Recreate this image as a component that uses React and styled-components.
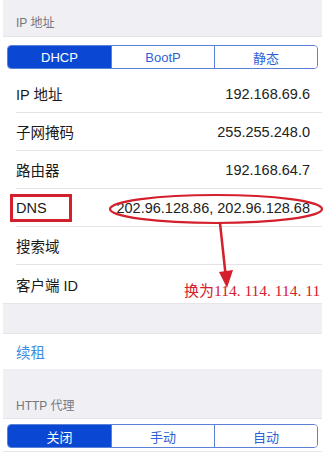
import styled, { createGlobalStyle } from 'styled-components';

const GlobalStyle = createGlobalStyle`
  html, body {
    margin: 0;
    padding: 0;
    background: #ffffff;
  }
  body {
    font-family: "Liberation Sans", "Noto Sans CJK SC", Arial, sans-serif;
  }
`;

const BLUE = '#0a48d4';
const RED = '#d4202c';

const Page = styled.div`
  position: relative;
  width: 325px;
  height: 459px;
  padding: 0 3px;
  box-sizing: border-box;
  overflow: hidden;
  background: #ffffff;
`;

const GroupHeader = styled.div`
  height: ${(p) => p.height}px;
  background: #efeff4;
  display: flex;
  align-items: flex-end;
  padding: 0 0 ${(p) => p.bottom}px 13px;
  box-sizing: border-box;
  font-size: 12px;
  color: #77777c;
  border-bottom: 1px solid #e3e3e8;
`;

const Spacer = styled.div`
  height: ${(p) => p.height}px;
  background: #efeff4;
  border-top: 1px solid #e6e6ea;
  border-bottom: 1px solid #e3e3e8;
  box-sizing: border-box;
`;

const SegmentWrap = styled.div`
  padding: ${(p) => p.top}px 4px ${(p) => p.bottom}px;
  background: #ffffff;
`;

const Segmented = styled.div`
  display: grid;
  grid-template-columns: 1fr 1fr 1fr;
  height: 24px;
  border: 1px solid #5b80d8;
  border-radius: 4px;
  overflow: hidden;
  box-sizing: border-box;
`;

const Segment = styled.div`
  display: flex;
  align-items: center;
  justify-content: center;
  font-size: 13px;
  color: ${(p) => (p.active ? '#ffffff' : '#2f5fd6')};
  background: ${(p) => (p.active ? BLUE : '#ffffff')};
  border-left: ${(p) => (p.first ? 'none' : '1px solid #5b80d8')};
`;

const List = styled.div`
  background: #ffffff;
  padding-left: 13px;
`;

const Row = styled.div`
  height: 38px;
  display: flex;
  align-items: center;
  justify-content: space-between;
  padding-right: 12px;
  font-size: 14.5px;
  color: #1a1a1a;
  border-bottom: ${(p) => (p.last ? 'none' : '1px solid #e4e4e6')};
  box-sizing: border-box;
`;

const Value = styled.span`
  color: #222222;
`;

const LinkRow = styled.div`
  height: 35px;
  display: flex;
  align-items: center;
  padding-left: 13px;
  font-size: 14.5px;
  color: #3f8ee2;
  background: #ffffff;
`;

const BottomLine = styled.div`
  height: 1px;
  background: #e8e8ec;
  margin-top: 3px;
`;

const Overlay = styled.svg`
  position: absolute;
  left: 0;
  top: 0;
  pointer-events: none;
`;

const Note = styled.span`
  position: absolute;
  left: 184px;
  top: 279px;
  font-family: "Liberation Serif", "Noto Sans CJK SC", serif;
  font-size: 15.5px;
  color: ${RED};
  white-space: nowrap;
`;

const NoteCjk = styled.span`
  font-family: "Noto Sans CJK SC", sans-serif;
  font-size: 15px;
`;

const rows = [
  ['IP 地址', '192.168.69.6'],
  ['子网掩码', '255.255.248.0'],
  ['路由器', '192.168.64.7'],
  ['DNS', '202.96.128.86, 202.96.128.68'],
  ['搜索域', ''],
  ['客户端 ID', ''],
];

function SegmentBar({ items }) {
  return (
    <Segmented>
      {items.map((item, i) => (
        <Segment key={item} active={i === 0} first={i === 0}>{item}</Segment>
      ))}
    </Segmented>
  );
}

export default function App() {
  return (
    <>
      <GlobalStyle />
      <Page>
        <GroupHeader height={37} bottom={6}>IP 地址</GroupHeader>
        <SegmentWrap top={8} bottom={6}>
          <SegmentBar items={['DHCP', 'BootP', '静态']} />
        </SegmentWrap>
        <List>
          {rows.map(([label, value], i) => (
            <Row key={label} last={i === rows.length - 1}>
              <span>{label}</span>
              <Value>{value}</Value>
            </Row>
          ))}
        </List>
        <Spacer height={31} />
        <LinkRow>续租</LinkRow>
        <GroupHeader height={50} bottom={5}>HTTP 代理</GroupHeader>
        <SegmentWrap top={5} bottom={0}>
          <SegmentBar items={['关闭', '手动', '自动']} />
        </SegmentWrap>
        <BottomLine />

        <Overlay width="325" height="459" viewBox="0 0 325 459">
          <rect x="11.5" y="195.5" width="59" height="25" fill="none" stroke={RED} strokeWidth="3" />
          <ellipse cx="216" cy="209" rx="106" ry="14" fill="none" stroke={RED} strokeWidth="2.2" />
          <line x1="220" y1="223" x2="225.5" y2="274" stroke={RED} strokeWidth="2.5" />
          <polygon points="219,272 233,270 227,288" fill={RED} />
        </Overlay>
        <Note><NoteCjk>换为</NoteCjk>114. 114. 114. 11</Note>
      </Page>
    </>
  );
}
